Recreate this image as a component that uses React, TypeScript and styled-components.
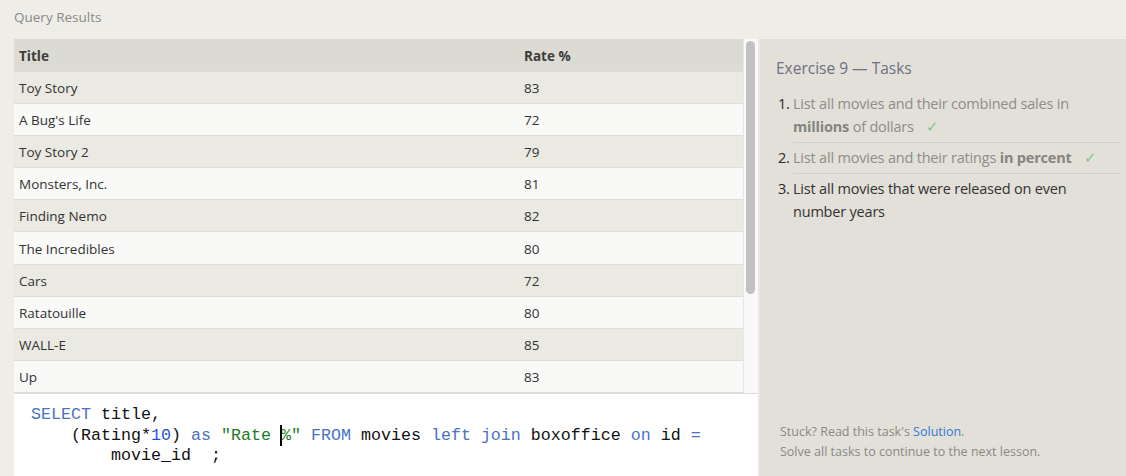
import React from "react";
import styled, { createGlobalStyle } from "styled-components";

const Global = createGlobalStyle`
  html, body { margin: 0; padding: 0; }
  body {
    background: #efede7;
    font-family: "Open Sans", "Noto Sans", sans-serif;
    width: 1126px;
    height: 476px;
    overflow: hidden;
  }
`;

const Page = styled.div`
  display: flex;
  flex-direction: column;
  height: 476px;
`;

const TopBar = styled.div`
  height: 39px;
  padding-left: 14px;
  display: flex;
  align-items: center;
  box-sizing: border-box;
  padding-bottom: 5px;
  font-size: 13.5px;
  color: #8a8a86;
  flex: none;
`;

const Main = styled.div`
  display: flex;
  flex: 1;
  min-height: 0;
`;

const LeftCol = styled.div`
  margin-left: 14px;
  width: 744px;
  display: flex;
  flex-direction: column;
`;

const ResultsArea = styled.div`
  height: 354px;
  flex: none;
  display: flex;
  overflow: hidden;
`;

const Table = styled.div`
  width: 729px;
  display: flex;
  flex-direction: column;
`;

const Row = styled.div<{ $variant: "head" | "odd" | "even" }>`
  flex: none;
  display: grid;
  grid-template-columns: 505px 1fr;
  height: ${(p) => (p.$variant === "head" ? "33px" : "32.1px")};
  padding-top: 1px;
  box-sizing: border-box;
  align-items: center;
  border-bottom: 1px solid #dfddd7;
  background: ${(p) =>
    p.$variant === "head" ? "#dcdbd3" : p.$variant === "odd" ? "#eae9e2" : "#f9f9f8"};
  font-size: 13.5px;
  font-weight: ${(p) => (p.$variant === "head" ? 700 : 400)};
  color: ${(p) => (p.$variant === "head" ? "#3c3c3c" : "#333")};
`;

const Cell = styled.div`
  padding-left: 5px;
  white-space: nowrap;
`;

const ScrollTrack = styled.div`
  width: 15px;
  background: #f9f9fa;
  border-left: 1px solid #e6e6e6;
  box-sizing: border-box;
  padding: 2px 3px 0 2px;
`;

const ScrollThumb = styled.div`
  height: 253px;
  border-radius: 5px;
  background: #c1c1c1;
`;

const Editor = styled.div`
  flex: 1;
  background: #ffffff;
  border-top: 1px solid #dcdcdc;
  padding: 11px 0 0 17px;
  box-sizing: border-box;
`;

const Code = styled.pre`
  margin: 0;
  font-family: "Liberation Mono", "Courier New", monospace;
  font-size: 16.67px;
  line-height: 20.5px;
  color: #111;
`;

const Kw = styled.span`
  color: #4a72c0;
`;

const Str = styled.span`
  color: #1d7a25;
`;

const Num = styled.span`
  color: #2a4fd0;
`;

const Caret = styled.span`
  position: relative;
  &::before {
    content: "";
    position: absolute;
    left: -1px;
    top: -1px;
    bottom: -1px;
    border-left: 2px solid #000;
  }
`;

const Side = styled.div`
  flex: 1;
  background: #e2e0d9;
  border-left: 2px solid #e9e7e1;
  display: flex;
  flex-direction: column;
  padding: 18px 6px 0 16px;
  box-sizing: border-box;
`;

const SideTitle = styled.div`
  font-size: 15.5px;
  color: #6d7180;
  margin-bottom: 9px;
`;

const TaskList = styled.ol`
  margin: 0;
  padding: 0;
  list-style: none;
`;

const Task = styled.li<{ $done?: boolean; $last?: boolean }>`
  display: flex;
  font-size: 14.5px;
  letter-spacing: -0.2px;
  line-height: 23px;
  padding: 4px 0 4px;
  color: ${(p) => (p.$done ? "#8e8d89" : "#333")};
  & > div:last-child {
    flex: 1;
    border-bottom: ${(p) => (p.$last ? "none" : "1px solid #d2d0c9")};
    padding-bottom: 4px;
    margin-bottom: -5px;
  }
  b { font-weight: 700; color: #858480; }
`;

const Num2 = styled.div`
  width: 15px;
  color: #2a2a2a;
  flex: none;
  padding-left: 2px;
`;

const Check = styled.span`
  color: #7dc98d;
  margin-left: 12px;
`;

const Footer = styled.div`
  margin-top: auto;
  padding: 0 0 15px 4px;
  font-size: 12.5px;
  line-height: 19.5px;
  color: #8a8984;
`;

const Link = styled.span`
  color: #3378d4;
`;

const rows: [string, string][] = [
  ["Toy Story", "83"],
  ["A Bug's Life", "72"],
  ["Toy Story 2", "79"],
  ["Monsters, Inc.", "81"],
  ["Finding Nemo", "82"],
  ["The Incredibles", "80"],
  ["Cars", "72"],
  ["Ratatouille", "80"],
  ["WALL-E", "85"],
  ["Up", "83"],
];

export default function App() {
  return (
    <Page>
      <Global />
      <TopBar>Query Results</TopBar>
      <Main>
        <LeftCol>
          <ResultsArea>
            <Table>
              <Row $variant="head">
                <Cell>Title</Cell>
                <Cell>Rate %</Cell>
              </Row>
              {rows.map(([t, r], i) => (
                <Row key={t} $variant={i % 2 === 0 ? "odd" : "even"}>
                  <Cell>{t}</Cell>
                  <Cell>{r}</Cell>
                </Row>
              ))}
            </Table>
            <ScrollTrack>
              <ScrollThumb />
            </ScrollTrack>
          </ResultsArea>
          <Editor>
            <Code>
              <Kw>SELECT</Kw> title,{"\n"}
              {"    "}(Rating*<Num>10</Num>) <Kw>as</Kw> <Str>"Rate <Caret>%</Caret>"</Str> <Kw>FROM</Kw> movies <Kw>left</Kw> <Kw>join</Kw> boxoffice <Kw>on</Kw> id <Kw>=</Kw>{"\n"}
              {"        "}movie_id  ;
            </Code>
          </Editor>
        </LeftCol>
        <Side>
          <SideTitle>Exercise 9 — Tasks</SideTitle>
          <TaskList>
            <Task $done>
              <Num2>1.</Num2>
              <div>
                List all movies and their combined sales in <b>millions</b> of dollars
                <Check>✓</Check>
              </div>
            </Task>
            <Task $done>
              <Num2>2.</Num2>
              <div>
                List all movies and their ratings <b>in percent</b>
                <Check>✓</Check>
              </div>
            </Task>
            <Task $last>
              <Num2>3.</Num2>
              <div>List all movies that were released on even number years</div>
            </Task>
          </TaskList>
          <Footer>
            Stuck? Read this task's <Link>Solution</Link>.
            <br />
            Solve all tasks to continue to the next lesson.
          </Footer>
        </Side>
      </Main>
    </Page>
  );
}
